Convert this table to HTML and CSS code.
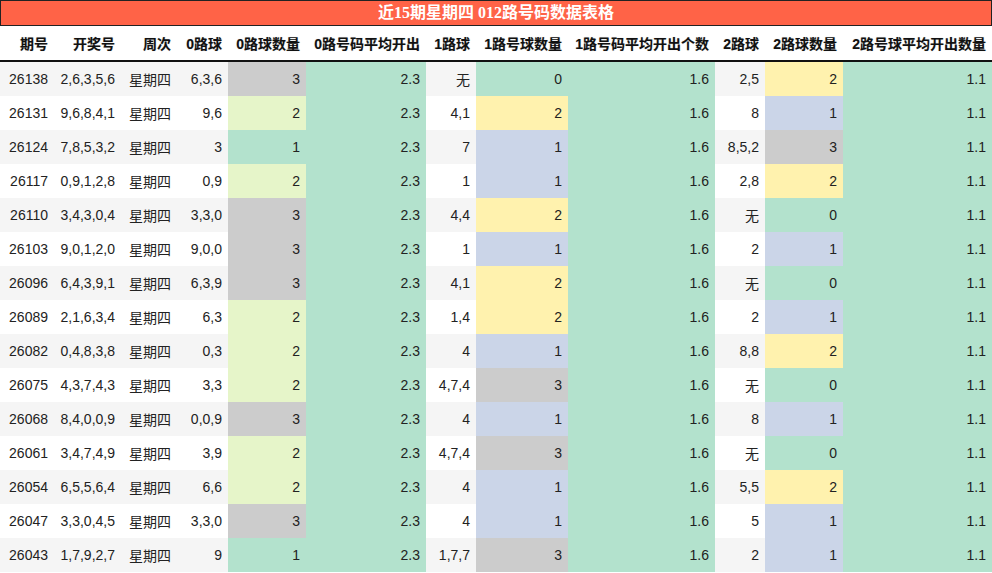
FILE: index.html
```html
<!DOCTYPE html>
<html lang="zh">
<head>
<meta charset="utf-8">
<title>近15期星期四 012路号码数据表格</title>
<link rel="stylesheet" href="styles.css">
</head>
<body>
<div class="title">近15期星期四 012路号码数据表格</div>
<table class="grid">
<colgroup>
<col class="c1"><col class="c2"><col class="c3"><col class="c4"><col class="c5"><col class="c6"><col class="c7"><col class="c8"><col class="c9"><col class="c10"><col class="c11"><col class="c12">
</colgroup>
<thead>
<tr><th>期号</th><th>开奖号</th><th>周次</th><th>0路球</th><th>0路球数量</th><th>0路号码平均开出</th><th>1路球</th><th>1路号球数量</th><th>1路号码平均开出个数</th><th>2路球</th><th>2路球数量</th><th>2路号球平均开出数量</th></tr>
</thead>
<tbody>
<tr><td>26138</td><td>2,6,3,5,6</td><td>星期四</td><td>6,3,6</td><td class="gray">3</td><td class="mint">2.3</td><td>无</td><td class="mint">0</td><td class="mint">1.6</td><td>2,5</td><td class="yel">2</td><td class="mint">1.1</td></tr>
<tr><td>26131</td><td>9,6,8,4,1</td><td>星期四</td><td>9,6</td><td class="lg">2</td><td class="mint">2.3</td><td>4,1</td><td class="yel">2</td><td class="mint">1.6</td><td>8</td><td class="blue">1</td><td class="mint">1.1</td></tr>
<tr><td>26124</td><td>7,8,5,3,2</td><td>星期四</td><td>3</td><td class="mint">1</td><td class="mint">2.3</td><td>7</td><td class="blue">1</td><td class="mint">1.6</td><td>8,5,2</td><td class="gray">3</td><td class="mint">1.1</td></tr>
<tr><td>26117</td><td>0,9,1,2,8</td><td>星期四</td><td>0,9</td><td class="lg">2</td><td class="mint">2.3</td><td>1</td><td class="blue">1</td><td class="mint">1.6</td><td>2,8</td><td class="yel">2</td><td class="mint">1.1</td></tr>
<tr><td>26110</td><td>3,4,3,0,4</td><td>星期四</td><td>3,3,0</td><td class="gray">3</td><td class="mint">2.3</td><td>4,4</td><td class="yel">2</td><td class="mint">1.6</td><td>无</td><td class="mint">0</td><td class="mint">1.1</td></tr>
<tr><td>26103</td><td>9,0,1,2,0</td><td>星期四</td><td>9,0,0</td><td class="gray">3</td><td class="mint">2.3</td><td>1</td><td class="blue">1</td><td class="mint">1.6</td><td>2</td><td class="blue">1</td><td class="mint">1.1</td></tr>
<tr><td>26096</td><td>6,4,3,9,1</td><td>星期四</td><td>6,3,9</td><td class="gray">3</td><td class="mint">2.3</td><td>4,1</td><td class="yel">2</td><td class="mint">1.6</td><td>无</td><td class="mint">0</td><td class="mint">1.1</td></tr>
<tr><td>26089</td><td>2,1,6,3,4</td><td>星期四</td><td>6,3</td><td class="lg">2</td><td class="mint">2.3</td><td>1,4</td><td class="yel">2</td><td class="mint">1.6</td><td>2</td><td class="blue">1</td><td class="mint">1.1</td></tr>
<tr><td>26082</td><td>0,4,8,3,8</td><td>星期四</td><td>0,3</td><td class="lg">2</td><td class="mint">2.3</td><td>4</td><td class="blue">1</td><td class="mint">1.6</td><td>8,8</td><td class="yel">2</td><td class="mint">1.1</td></tr>
<tr><td>26075</td><td>4,3,7,4,3</td><td>星期四</td><td>3,3</td><td class="lg">2</td><td class="mint">2.3</td><td>4,7,4</td><td class="gray">3</td><td class="mint">1.6</td><td>无</td><td class="mint">0</td><td class="mint">1.1</td></tr>
<tr><td>26068</td><td>8,4,0,0,9</td><td>星期四</td><td>0,0,9</td><td class="gray">3</td><td class="mint">2.3</td><td>4</td><td class="blue">1</td><td class="mint">1.6</td><td>8</td><td class="blue">1</td><td class="mint">1.1</td></tr>
<tr><td>26061</td><td>3,4,7,4,9</td><td>星期四</td><td>3,9</td><td class="lg">2</td><td class="mint">2.3</td><td>4,7,4</td><td class="gray">3</td><td class="mint">1.6</td><td>无</td><td class="mint">0</td><td class="mint">1.1</td></tr>
<tr><td>26054</td><td>6,5,5,6,4</td><td>星期四</td><td>6,6</td><td class="lg">2</td><td class="mint">2.3</td><td>4</td><td class="blue">1</td><td class="mint">1.6</td><td>5,5</td><td class="yel">2</td><td class="mint">1.1</td></tr>
<tr><td>26047</td><td>3,3,0,4,5</td><td>星期四</td><td>3,3,0</td><td class="gray">3</td><td class="mint">2.3</td><td>4</td><td class="blue">1</td><td class="mint">1.6</td><td>5</td><td class="blue">1</td><td class="mint">1.1</td></tr>
<tr><td>26043</td><td>1,7,9,2,7</td><td>星期四</td><td>9</td><td class="mint">1</td><td class="mint">2.3</td><td>1,7,7</td><td class="gray">3</td><td class="mint">1.6</td><td>2</td><td class="blue">1</td><td class="mint">1.1</td></tr>
</tbody>
</table>
</body>
</html>
```
FILE: styles.css
```css
html, body {
  margin: 0;
  padding: 0;
  background: #ffffff;
}
body {
  width: 992px;
  font-family: "Liberation Sans", "Noto Sans CJK SC", sans-serif;
  font-size: 14px;
  color: #222222;
}
.title {
  box-sizing: border-box;
  width: 992px;
  height: 26px;
  background: #ff6347;
  border: 1px solid #222222;
  color: #ffffff;
  font-family: "Liberation Serif", "Noto Sans CJK SC", serif;
  font-weight: bold;
  font-size: 16px;
  line-height: 23px;
  text-align: center;
}
.grid {
  width: 992px;
  border-collapse: collapse;
  table-layout: fixed;
}
.c1 { width: 54px; }
.c2 { width: 67px; }
.c3 { width: 56px; }
.c4 { width: 51px; }
.c5 { width: 78px; }
.c6 { width: 120px; }
.c7 { width: 50px; }
.c8 { width: 92px; }
.c9 { width: 147px; }
.c10 { width: 50px; }
.c11 { width: 78px; }
.c12 { width: 149px; }
.grid th {
  height: 34px;
  padding: 0 6px;
  text-align: right;
  font-weight: bold;
  color: #111111;
  border-bottom: 2px solid #111111;
  white-space: nowrap;
  text-shadow: 0 0 1px rgba(0,0,0,0.25);
}
.grid td {
  height: 34px;
  padding: 0 6px;
  text-align: right;
  white-space: nowrap;
}
.grid tbody tr:nth-child(odd) { background: #f5f5f5; }
.grid tbody tr:nth-child(even) { background: #ffffff; }
.grid td.gray { background: #cccccc; }
.grid td.mint { background: #b3e2cd; }
.grid td.lg { background: #e6f5c9; }
.grid td.yel { background: #fff2ae; }
.grid td.blue { background: #cbd5e8; }
```
